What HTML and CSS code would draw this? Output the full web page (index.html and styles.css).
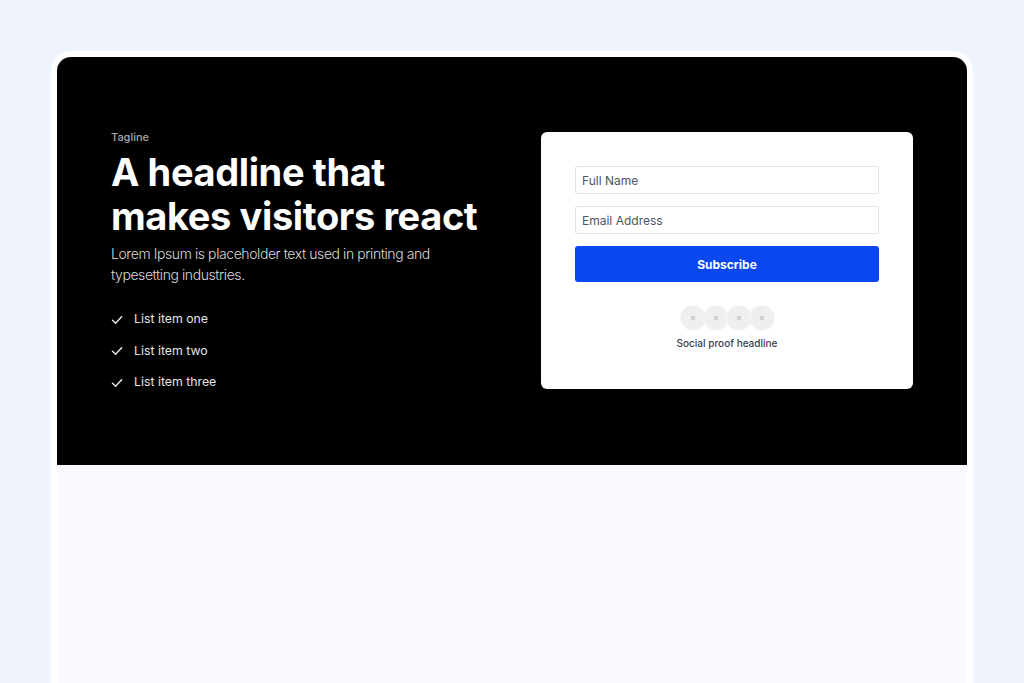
FILE: index.html
```html
<!DOCTYPE html>
<html lang="en">
<head>
<meta charset="utf-8">
<title>Hero</title>
<link rel="stylesheet" href="styles.css">
</head>
<body>
<div class="frame">
  <section class="hero">
    <div class="copy">
      <p class="tagline">Tagline</p>
      <h1 class="headline">A headline that makes visitors react</h1>
      <p class="lead">Lorem Ipsum is placeholder text used in printing and typesetting industries.</p>
      <ul class="checks">
        <li><svg class="check" viewBox="0 0 12 12" width="12" height="12"><path d="M1.5 6.3 L4.6 9.2 L10.6 2.8" fill="none" stroke="currentColor" stroke-width="1.5" stroke-linecap="round" stroke-linejoin="round"/></svg>List item one</li>
        <li><svg class="check" viewBox="0 0 12 12" width="12" height="12"><path d="M1.5 6.3 L4.6 9.2 L10.6 2.8" fill="none" stroke="currentColor" stroke-width="1.5" stroke-linecap="round" stroke-linejoin="round"/></svg>List item two</li>
        <li><svg class="check" viewBox="0 0 12 12" width="12" height="12"><path d="M1.5 6.3 L4.6 9.2 L10.6 2.8" fill="none" stroke="currentColor" stroke-width="1.5" stroke-linecap="round" stroke-linejoin="round"/></svg>List item three</li>
      </ul>
    </div>
    <div class="card">
      <form class="form">
        <input class="field" type="text" placeholder="Full Name">
        <input class="field" type="email" placeholder="Email Address">
        <button class="btn" type="button">Subscribe</button>
      </form>
      <div class="proof">
        <div class="avatars">
          <span class="avatar"></span><span class="avatar"></span><span class="avatar"></span><span class="avatar"></span>
        </div>
        <p class="proof-text">Social proof headline</p>
      </div>
    </div>
  </section>
</div>
</body>
</html>
```

FILE: styles.css
```css
* { box-sizing: border-box; }
html, body { margin: 0; padding: 0; }
body {
  background: #eef3fc;
  font-family: Inter, "Noto Sans", sans-serif;
  height: 683px;
  overflow: hidden;
}
.frame {
  margin: 51px 51px 0;
  border: 6px solid #ffffff;
  border-bottom: none;
  border-radius: 20px 20px 0 0;
  background: #f8faff;
  height: 632px;
}
.hero {
  background: #000;
  border-radius: 14px 14px 0 0;
  height: 408px;
  padding: 0 54px;
  display: grid;
  grid-template-columns: 1fr 1fr;
  column-gap: 58px;
  align-items: center;
}
.copy { color: #fff; }
.tagline {
  margin: 0 0 6px;
  font-size: 11px;
  line-height: 14px;
  font-weight: 500;
  color: #a8a8a8;
}
.headline {
  margin: 0;
  font-size: 38px;
  line-height: 44px;
  font-weight: 700;
  letter-spacing: -0.01em;
  color: #fff;
}
.lead {
  margin: 5px 0 0;
  font-size: 14px;
  line-height: 21px;
  font-weight: 300;
  letter-spacing: -0.03em;
  color: #d9d9d9;
}
.checks {
  list-style: none;
  margin: 25px 0 0;
  padding: 0;
  display: flex;
  flex-direction: column;
  gap: 13px;
}
.checks li {
  display: flex;
  align-items: center;
  gap: 11px;
  font-size: 12.3px;
  line-height: 18.5px;
  color: #e5e5e5;
}
.check { color: #e5e5e5; flex: none; }
.card {
  background: #fff;
  border-radius: 6px;
  height: 257px;
  padding: 34px;
  margin-top: -1px;
}
.form {
  display: flex;
  flex-direction: column;
  gap: 12px;
}
.field {
  height: 28px;
  border: 1px solid #dfe3e8;
  border-radius: 2px;
  padding: 0 6px;
  font-family: Inter, "Noto Sans", sans-serif;
  font-size: 12px;
  color: #374151;
  background: #fff;
}
.field::placeholder { color: #4b5563; }
.btn {
  height: 36px;
  border: none;
  border-radius: 3px;
  background: #0a47ee;
  color: #fff;
  font-family: Inter, "Noto Sans", sans-serif;
  font-size: 12px;
  font-weight: 700;
}
.proof {
  margin-top: 23px;
  display: flex;
  flex-direction: column;
  align-items: center;
}
.avatars { display: flex; }
.avatar {
  width: 26px;
  height: 26px;
  border-radius: 50%;
  background: #efefef;
  border: 1px solid #f6f6f6;
  margin-left: -3px;
  position: relative;
}
.avatar:first-child { margin-left: 0; }
.avatar::after {
  content: "";
  position: absolute;
  left: 50%;
  top: 50%;
  width: 4px;
  height: 4px;
  margin: -2px 0 0 -2px;
  background: #cfcfcf;
}
.proof-text {
  margin: 5px 0 0;
  font-size: 10px;
  line-height: 14px;
  font-weight: 500;
  color: #374151;
}
```
